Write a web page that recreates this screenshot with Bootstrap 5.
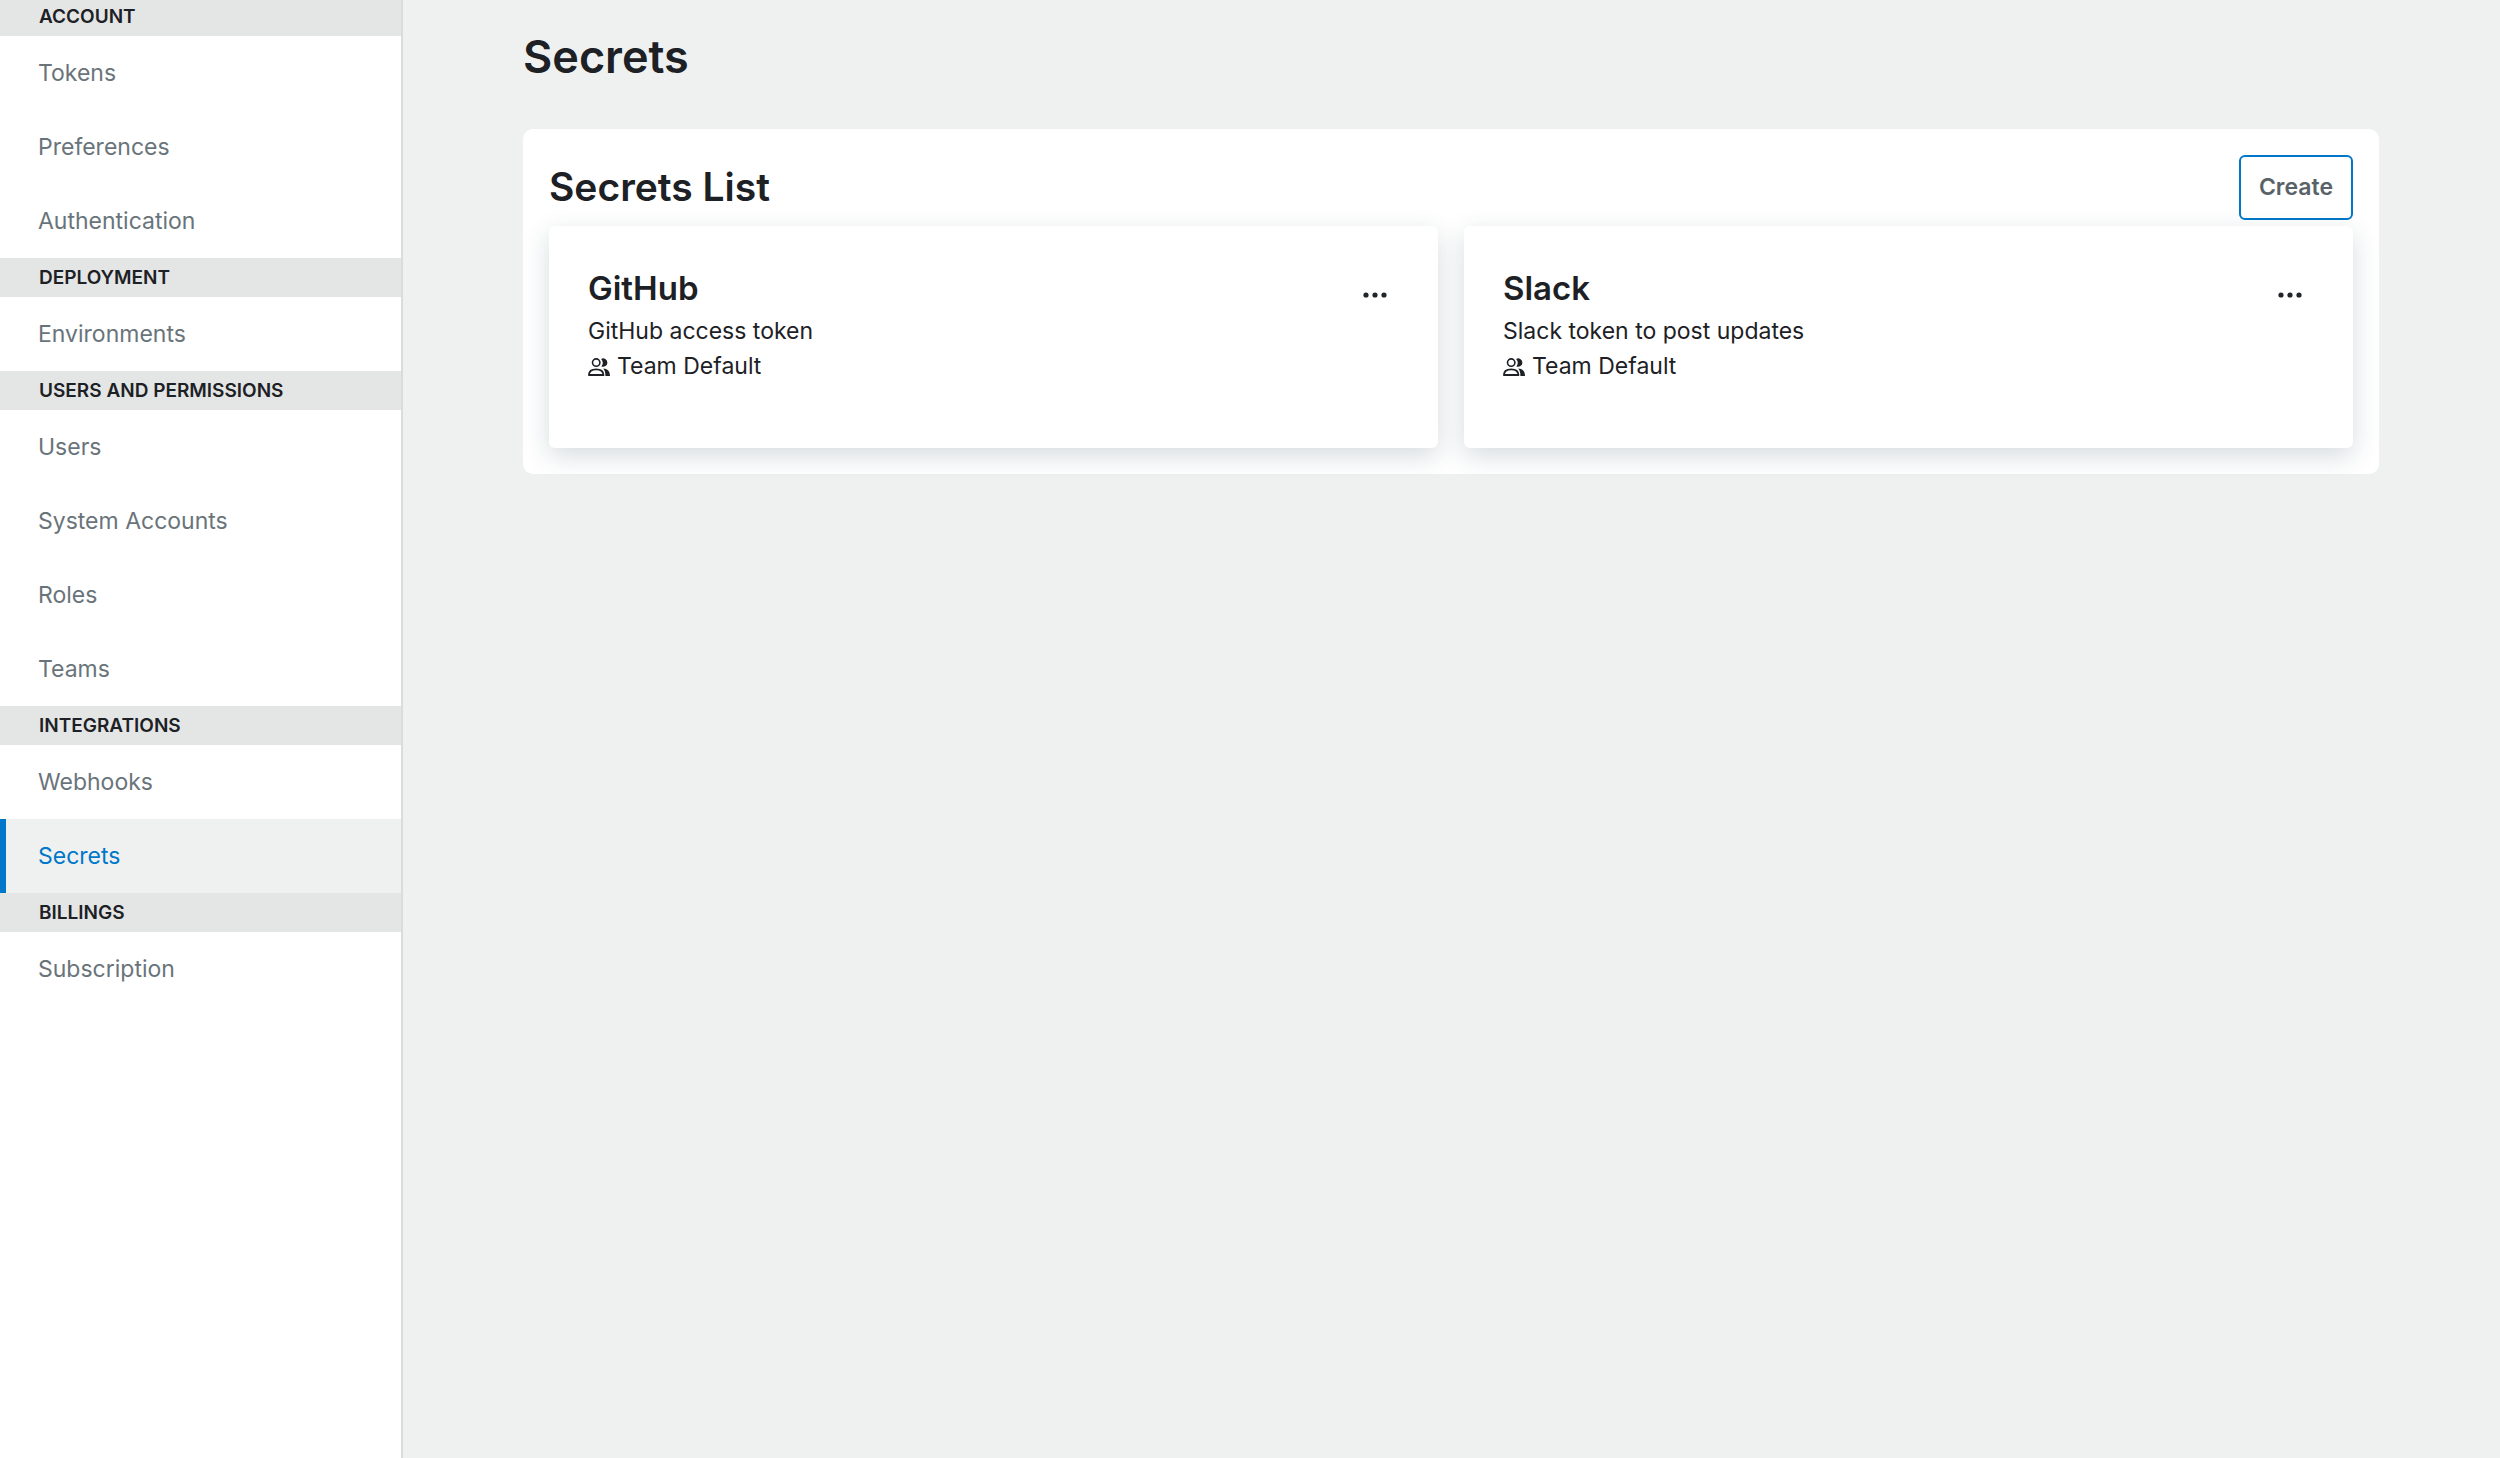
<!DOCTYPE html>
<html lang="en">
<head>
<meta charset="utf-8">
<meta name="viewport" content="width=device-width, initial-scale=1">
<title>Secrets</title>
<link href="https://cdn.jsdelivr.net/npm/bootstrap@5.3.0/dist/css/bootstrap.min.css" rel="stylesheet">
<style>
  :root { --ink: #1d2125; --muted: #69747a; --canvas: #eff1f1; --band: #e4e6e5; --accent: #0077c8; }
  body { font-family: Inter, "Liberation Sans", sans-serif; font-size: 23px; line-height: 35px; color: var(--ink); background: var(--canvas); }
  .settings-nav { width: 403px; border-right: 2px solid #d9dcdc; overflow: hidden; }
  .nav-scrolled { margin-top: -3px; }
  .nav-band { height: 39px; padding: 0 39px; font-size: 19px; line-height: 39px; font-weight: 600; background: var(--band); }
  .settings-nav .nav-link { height: 74px; padding: 0 38px; line-height: 74px; color: var(--muted); }
  .settings-nav .nav-link.active { color: var(--accent); background: var(--canvas); box-shadow: inset 6px 0 var(--accent); }
  .page-main { padding: 29px 121px 29px 120px; }
  .page-title { font-size: 45px; line-height: 56px; font-weight: 600; margin-bottom: 44px; }
  .list-panel { padding: 26px; border-radius: 10px; }
  .panel-head { margin-bottom: 6px; }
  .panel-title { font-size: 39px; line-height: 46px; font-weight: 600; padding-bottom: 2px; }
  .btn-create { height: 65px; padding: 0 18px; font-size: 23px; font-weight: 600; color: #586268; border: 2px solid var(--accent); border-radius: 6px; }
  .panel-grid { --bs-gutter-x: 26px; --bs-gutter-y: 26px; }
  .secret-card { min-height: 222px; padding: 42px 39px 38px; border-radius: 6px; box-shadow: 0 8px 26px rgba(25, 60, 80, .18); }
  .secret-name { font-size: 33px; line-height: 40px; font-weight: 600; margin-bottom: 6px; }
  .team-line { gap: 7px; }
  .btn-more { width: 48px; height: 54px; }
</style>
</head>
<body>
<svg class="d-none" aria-hidden="true">
  <symbol id="people" viewBox="0 0 22 18">
    <path d="M13.2 .9A4.2 4.2 0 1 1 13.4 8.4A6 6 0 0 0 13.2 .9z" fill="currentColor"/>
    <path d="M15.2 10.6C19.5 10.7 22 13.3 22 18H17.4C17.5 14.8 16.8 12.5 15.2 10.6z" fill="currentColor"/>
    <circle cx="8.2" cy="4.6" r="3.7" fill="none" stroke="currentColor" stroke-width="1.6"/>
    <path d="M.9 17C1 13.2 3.5 11.4 8.2 11.4S15.3 13.2 15.5 17z" fill="none" stroke="currentColor" stroke-width="1.8" stroke-linejoin="round"/>
  </symbol>
  <symbol id="dots" viewBox="0 0 24 6">
    <g fill="currentColor"><circle cx="3" cy="3" r="2.6"/><circle cx="12" cy="3" r="2.6"/><circle cx="21" cy="3" r="2.6"/></g>
  </symbol>
</svg>
<div class="d-flex min-vh-100">
  <aside class="settings-nav bg-white flex-shrink-0">
    <nav class="nav-scrolled nav flex-column" aria-label="Settings">
      <h2 class="nav-band mb-0">ACCOUNT</h2>
      <a class="nav-link" href="#">Tokens</a>
      <a class="nav-link" href="#">Preferences</a>
      <a class="nav-link" href="#">Authentication</a>
      <h2 class="nav-band mb-0">DEPLOYMENT</h2>
      <a class="nav-link" href="#">Environments</a>
      <h2 class="nav-band mb-0">USERS AND PERMISSIONS</h2>
      <a class="nav-link" href="#">Users</a>
      <a class="nav-link" href="#">System Accounts</a>
      <a class="nav-link" href="#">Roles</a>
      <a class="nav-link" href="#">Teams</a>
      <h2 class="nav-band mb-0">INTEGRATIONS</h2>
      <a class="nav-link" href="#">Webhooks</a>
      <a class="nav-link active" aria-current="page" href="#">Secrets</a>
      <h2 class="nav-band mb-0">BILLINGS</h2>
      <a class="nav-link" href="#">Subscription</a>
    </nav>
  </aside>
  <main class="page-main flex-grow-1">
    <h1 class="page-title">Secrets</h1>
    <section class="list-panel bg-white">
      <div class="panel-head d-flex align-items-center justify-content-between">
        <h2 class="panel-title mb-0">Secrets List</h2>
        <button type="button" class="btn btn-create">Create</button>
      </div>
      <div class="row panel-grid">
        <div class="col-6">
          <article class="secret-card bg-white d-flex justify-content-between">
            <div>
              <h3 class="secret-name">GitHub</h3>
              <p class="mb-0">GitHub access token</p>
              <div class="team-line d-flex align-items-center"><svg width="22" height="18" aria-hidden="true"><use href="#people"/></svg><span>Team Default</span></div>
            </div>
            <button type="button" class="btn btn-more p-0 border-0 d-flex align-items-center justify-content-center" aria-label="More actions for GitHub"><svg width="24" height="6" aria-hidden="true"><use href="#dots"/></svg></button>
          </article>
        </div>
        <div class="col-6">
          <article class="secret-card bg-white d-flex justify-content-between">
            <div>
              <h3 class="secret-name">Slack</h3>
              <p class="mb-0">Slack token to post updates</p>
              <div class="team-line d-flex align-items-center"><svg width="22" height="18" aria-hidden="true"><use href="#people"/></svg><span>Team Default</span></div>
            </div>
            <button type="button" class="btn btn-more p-0 border-0 d-flex align-items-center justify-content-center" aria-label="More actions for Slack"><svg width="24" height="6" aria-hidden="true"><use href="#dots"/></svg></button>
          </article>
        </div>
      </div>
    </section>
  </main>
</div>
<script src="https://cdn.jsdelivr.net/npm/bootstrap@5.3.0/dist/js/bootstrap.bundle.min.js"></script>
</body>
</html>
